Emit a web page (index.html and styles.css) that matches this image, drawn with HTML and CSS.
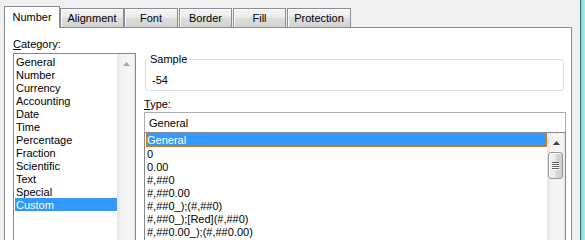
FILE: index.html
```html
<!DOCTYPE html>
<html lang="en">
<head>
    <meta charset="UTF-8">
    <title>Format Cells</title>
    <link rel="stylesheet" href="styles.css">
</head>
<body>
    <div class="dialog">
        <div class="sheet">
            <div class="tabs">
                <div class="tab active tab-number">Number</div>
                <div class="tab tab-alignment">Alignment</div>
                <div class="tab tab-font">Font</div>
                <div class="tab tab-border">Border</div>
                <div class="tab tab-fill">Fill</div>
                <div class="tab tab-protection">Protection</div>
            </div>

            <div class="panel">
                <div class="category">
                    <div class="label"><u>C</u>ategory:</div>
                    <div class="listbox cat-list">
                        <ul class="items">
                            <li>General</li>
                            <li>Number</li>
                            <li>Currency</li>
                            <li>Accounting</li>
                            <li>Date</li>
                            <li>Time</li>
                            <li>Percentage</li>
                            <li>Fraction</li>
                            <li>Scientific</li>
                            <li>Text</li>
                            <li>Special</li>
                            <li class="selected">Custom</li>
                        </ul>
                        <div class="scrollbar">
                            <div class="arrow-btn">
                                <svg width="7" height="4" viewBox="0 0 7 4"><path d="M0 4 L3.5 0 L7 4 Z" fill="#a6a6a6"/></svg>
                            </div>
                        </div>
                    </div>
                </div>

                <div class="format">
                    <fieldset class="sample">
                        <legend>Sample</legend>
                        <div class="sample-value">-54</div>
                    </fieldset>

                    <div class="label type-label"><u>T</u>ype:</div>
                    <div class="type-input">General</div>
                    <div class="listbox type-list">
                        <ul class="items">
                            <li class="selected focused">General</li>
                            <li>0</li>
                            <li>0.00</li>
                            <li>#,##0</li>
                            <li>#,##0.00</li>
                            <li>#,##0_);(#,##0)</li>
                            <li>#,##0_);[Red](#,##0)</li>
                            <li>#,##0.00_);(#,##0.00)</li>
                        </ul>
                        <div class="scrollbar">
                            <div class="arrow-btn">
                                <svg width="7" height="4" viewBox="0 0 7 4"><path d="M0 4 L3.5 0 L7 4 Z" fill="#404040"/></svg>
                            </div>
                            <div class="thumb">
                                <span></span><span></span><span></span><span></span>
                            </div>
                        </div>
                    </div>
                </div>
            </div>
        </div>
        <div class="desktop-edge"></div>
    </div>
</body>
</html>
```

FILE: styles.css
```css
* {
    box-sizing: border-box;
    margin: 0;
    padding: 0;
}

body {
    width: 585px;
    height: 240px;
    overflow: hidden;
    background-color: #F0F0F0;
    font-family: "Liberation Sans", Arial, sans-serif;
    font-size: 11px;
    color: #000;
}

.dialog {
    display: flex;
    height: 240px;
}

.sheet {
    width: 580px;
    padding-left: 4px;
}

.desktop-edge {
    flex: 1;
    border-left: 1px solid #2F6F70;
    background: linear-gradient(to right, #7FD6D8, #B4ECEC);
}

/* tabs */

.tabs {
    display: flex;
    align-items: flex-end;
    padding-top: 6px;
    height: 27px;
}

.tab {
    height: 19px;
    border: 1px solid #898C95;
    border-bottom: none;
    background: linear-gradient(to bottom, #F4F4F4, #EBEBEB 45%, #DDDDDD 50%, #D3D3D3);
    box-shadow: inset 1px 1px 0 #FCFCFC;
    text-align: center;
    line-height: 17px;
    padding-top: 1px;
}

.tab.active {
    position: relative;
    height: 22px;
    margin-bottom: -1px;
    background: #FFFFFF;
    box-shadow: none;
    line-height: 16px;
    padding-top: 2px;
    z-index: 1;
}

.tab-number { width: 56px; }
.tab-alignment { width: 64px; }
.tab-font { width: 54px; }
.tab-border { width: 53px; margin-left: 1px; }
.tab-fill { width: 53px; margin-left: 1px; }
.tab-protection { width: 64px; margin-left: 1px; }

/* panel */

.panel {
    display: flex;
    gap: 8px;
    width: 568px;
    height: 230px;
    border: 1px solid #898C95;
    background: #FFFFFF;
    padding: 10px 5px 0 8px;
}

.label {
    line-height: 13px;
    height: 13px;
}

.category {
    width: 123px;
}

.listbox {
    display: flex;
    border: 1px solid #828790;
    background: #FFFFFF;
}

.cat-list {
    margin-top: 2px;
    height: 200px;
    padding-left: 1px;
}

.items {
    list-style: none;
    flex: 1;
}

.items li {
    height: 13px;
    line-height: 11px;
    padding: 2px 0 0 1px;
    white-space: nowrap;
    overflow: hidden;
}

.cat-list .items {
    padding-top: 1px;
}

.items li.selected {
    background: #3399FF;
    color: #FFFFFF;
}

.items li.focused {
    height: 14px;
    padding-top: 2px;
    outline: 1px dotted #E0801C;
    outline-offset: -1px;
}

/* scrollbar */

.scrollbar {
    width: 18px;
    background: linear-gradient(to right, #E6E6E6, #F3F3F3 20%, #F5F5F5 80%, #EAEAEA);
    border-left: 1px solid #EAEAEA;
}

.arrow-btn {
    height: 17px;
    display: flex;
    align-items: center;
    justify-content: center;
    padding-top: 3px;
}

.thumb {
    width: 15px;
    height: 27px;
    margin: 2px 0 0 0;
    border: 1px solid #979797;
    border-radius: 3px;
    background: linear-gradient(to right, #F4F4F4, #E7E7E7 50%, #D6D6D6 51%, #CFCFCF);
    box-shadow: inset 1px 1px 0 #FFFFFF;
    display: flex;
    flex-direction: column;
    align-items: center;
    justify-content: center;
    gap: 1px;
}

.thumb span {
    width: 7px;
    height: 1px;
    background: #5E5E5E;
    box-shadow: 0 1px 0 #FFFFFF;
}

/* format side */

.format {
    width: 422px;
}

.sample {
    margin: 15px 2px 0 1px;
    border: 1px solid #D5DFE5;
    border-radius: 3px;
    padding: 8px 0 3px 3px;
}

.sample legend {
    line-height: 13px;
    padding: 0 2px 0 1px;
}

.sample-value {
    line-height: 13px;
    padding-left: 3px;
}

.type-label {
    margin-top: 7px;
}

.type-input {
    margin-top: 1px;
    height: 20px;
    border: 1px solid #ABADB3;
    border-bottom: none;
    line-height: 13px;
    padding: 4px 0 0 4px;
}

.type-list {
    height: 120px;
    padding-left: 1px;
}
```
